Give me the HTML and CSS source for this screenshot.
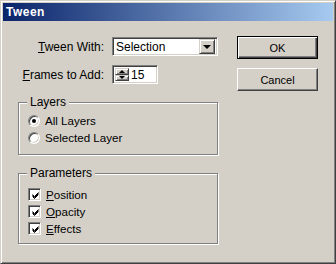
FILE: index.html
```html
<!DOCTYPE html>
<html>
<head>
<meta charset="utf-8">
<link rel="stylesheet" href="styles.css">
</head>
<body>
<div class="window">
  <div class="titlebar"><span class="title">Tween</span></div>
  <div class="client">
    <div class="main">
      <div class="fields">
        <span class="field-label"><u>T</u>ween With:</span>
        <div class="combo">
          <span class="combo-text">Selection</span>
          <span class="combo-btn"><span class="arrow-down"></span></span>
        </div>
        <span class="field-label"><u>F</u>rames to Add:</span>
        <div class="spin">
          <span class="spin-btns">
            <span class="spin-btn"><span class="tri-up"></span></span>
            <span class="spin-btn"><span class="tri-down"></span></span>
          </span>
          <span class="spin-text">15</span>
        </div>
      </div>
      <div class="group layers">
        <span class="group-title">Layers</span>
        <div class="opt"><span class="radio checked"></span><span>All Layers</span></div>
        <div class="opt"><span class="radio"></span><span>Selected Layer</span></div>
      </div>
      <div class="group params">
        <span class="group-title">Parameters</span>
        <div class="opt"><span class="check"><svg width="7" height="7" viewBox="0 0 7 7"><path d="M0.5 2.5 L2.5 4.5 L6.5 0.5 M0.5 3.5 L2.5 5.5 L6.5 1.5 M0.5 4.5 L2.5 6.5 L6.5 2.5" stroke="#000" stroke-width="1" fill="none"/></svg></span><span><u>P</u>osition</span></div>
        <div class="opt"><span class="check"><svg width="7" height="7" viewBox="0 0 7 7"><path d="M0.5 2.5 L2.5 4.5 L6.5 0.5 M0.5 3.5 L2.5 5.5 L6.5 1.5 M0.5 4.5 L2.5 6.5 L6.5 2.5" stroke="#000" stroke-width="1" fill="none"/></svg></span><span><u>O</u>pacity</span></div>
        <div class="opt"><span class="check"><svg width="7" height="7" viewBox="0 0 7 7"><path d="M0.5 2.5 L2.5 4.5 L6.5 0.5 M0.5 3.5 L2.5 5.5 L6.5 1.5 M0.5 4.5 L2.5 6.5 L6.5 2.5" stroke="#000" stroke-width="1" fill="none"/></svg></span><span><u>E</u>ffects</span></div>
      </div>
    </div>
    <div class="buttons">
      <button class="btn default"><span class="btn-inner">OK</span></button>
      <button class="btn"><span class="btn-inner">Cancel</span></button>
    </div>
  </div>
</div>
</body>
</html>
```
FILE: styles.css
```css
html, body {
  margin: 0;
  padding: 0;
  background: #d4d0c8;
}
body {
  font-family: "Liberation Sans", Arial, sans-serif;
  font-size: 12px;
  color: #000;
}
u { text-decoration: underline; text-underline-offset: 1px; }

.window {
  width: 336px;
  height: 264px;
  box-sizing: border-box;
  background: #d4d0c8;
  border: 1px solid;
  border-color: #d4d0c8 #404040 #404040 #d4d0c8;
  box-shadow: inset 1px 1px #fff, inset -1px -1px #808080;
  padding: 2px;
  display: flex;
  flex-direction: column;
}
.titlebar {
  height: 18px;
  background: linear-gradient(to right, #0a246a, #a6caf0);
  display: flex;
  align-items: center;
  padding-left: 3px;
}
.title {
  color: #fff;
  font-weight: bold;
  font-size: 12px;
  letter-spacing: 0.5px;
}
.client {
  display: flex;
  padding: 15px 0 0 15px;
}
.main {
  width: 200px;
  display: flex;
  flex-direction: column;
  padding-top: 1px;
}
.fields {
  display: grid;
  grid-template-columns: 86px auto;
  column-gap: 8px;
  row-gap: 9px;
  align-items: center;
}
.field-label {
  text-align: right;
  white-space: nowrap;
}
.combo {
  width: 106px;
  height: 19px;
  box-sizing: border-box;
  background: #fff;
  border: 1px solid;
  border-color: #808080 #fff #fff #808080;
  box-shadow: inset 1px 1px #404040, inset -1px -1px #d4d0c8;
  padding: 2px;
  display: flex;
  align-items: center;
}
.combo-text {
  flex: 1;
  padding-left: 1px;
}
.combo-btn {
  width: 16px;
  height: 15px;
  box-sizing: border-box;
  background: #d4d0c8;
  border: 1px solid;
  border-color: #d4d0c8 #404040 #404040 #d4d0c8;
  box-shadow: inset 1px 1px #fff, inset -1px -1px #808080;
  display: flex;
  align-items: center;
  justify-content: center;
}
.arrow-down {
  width: 0;
  height: 0;
  border-left: 4px solid transparent;
  border-right: 4px solid transparent;
  border-top: 4px solid #000;
  margin-top: 1px;
}
.spin {
  width: 46px;
  height: 19px;
  box-sizing: border-box;
  background: #fff;
  border: 1px solid;
  border-color: #808080 #fff #fff #808080;
  box-shadow: inset 1px 1px #404040, inset -1px -1px #d4d0c8;
  padding: 1px;
  display: flex;
}
.spin-btns {
  width: 14px;
  display: flex;
  flex-direction: column;
  margin: 1px 0 1px 1px;
}
.spin-btn {
  flex: 1;
  box-sizing: border-box;
  background: #d4d0c8;
  border: 1px solid;
  border-color: #d4d0c8 #404040 #404040 #d4d0c8;
  box-shadow: inset 1px 1px #fff, inset -1px -1px #808080;
  display: flex;
  align-items: center;
  justify-content: center;
}
.tri-up {
  width: 0; height: 0;
  border-left: 3px solid transparent;
  border-right: 3px solid transparent;
  border-bottom: 3px solid #000;
}
.tri-down {
  width: 0; height: 0;
  border-left: 3px solid transparent;
  border-right: 3px solid transparent;
  border-top: 3px solid #000;
}
.spin-text {
  padding-left: 2px;
  display: flex;
  align-items: center;
}
.group {
  position: relative;
  box-sizing: border-box;
  border: 1px solid #808080;
  box-shadow: inset 1px 1px #fff, 1px 1px #fff;
  padding-left: 9px;
}
.group-title {
  position: absolute;
  top: -8px;
  left: 8px;
  padding: 0 3px;
  background: #d4d0c8;
  line-height: 14px;
}
.layers {
  margin-top: 18px;
  height: 53px;
  padding-top: 9px;
}
.params {
  margin-top: 18px;
  height: 71px;
  padding-top: 12px;
}
.opt {
  height: 17px;
  display: flex;
  align-items: center;
  gap: 5px;
  font-size: 11.6px;
}
.radio {
  position: relative;
  width: 12px;
  height: 12px;
  box-sizing: border-box;
  border-radius: 50%;
  background: #fff;
  border: 1px solid;
  border-color: #808080 #fff #fff #808080;
  box-shadow: inset 1px 1px #404040, inset -1px -1px #d4d0c8;
}
.radio.checked::after {
  content: "";
  position: absolute;
  left: 3px;
  top: 3px;
  width: 4px;
  height: 4px;
  border-radius: 50%;
  background: #000;
}
.check {
  width: 13px;
  height: 13px;
  box-sizing: border-box;
  background: #fff;
  border: 1px solid;
  border-color: #808080 #fff #fff #808080;
  box-shadow: inset 1px 1px #404040, inset -1px -1px #d4d0c8;
  display: flex;
  align-items: center;
  justify-content: center;
}
.check svg { display: block; margin-left: 1px; margin-top: 1px; }
.buttons {
  margin-left: 19px;
  display: flex;
  flex-direction: column;
  gap: 9px;
}
.btn {
  width: 81px;
  height: 23px;
  box-sizing: border-box;
  padding: 0;
  margin: 0;
  font: inherit;
  color: #000;
  background: #d4d0c8;
  border: 1px solid;
  border-color: #fff #404040 #404040 #fff;
  box-shadow: inset -1px -1px #808080;
  display: flex;
  align-items: center;
  justify-content: center;
}
.btn.default {
  border: 1px solid #000;
  box-shadow: inset 1px 1px #fff, inset -1px -1px #404040, inset -2px -2px #808080;
}
.btn-inner {
  font-size: 11px;
}
```
